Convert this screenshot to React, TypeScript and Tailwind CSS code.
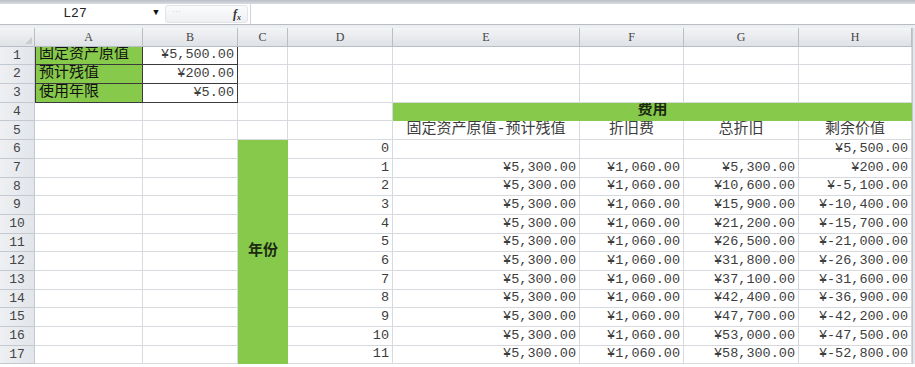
import React from "react";

const COLS = ["A", "B", "C", "D", "E", "F", "G", "H"];

const fmt = (n: number) => {
    const s = Math.abs(n).toLocaleString("en-US", { minimumFractionDigits: 2, maximumFractionDigits: 2 });
    return n < 0 ? `¥-${s}` : `¥${s}`;
};

const gridLine = "border-r border-b border-[#d6d9dd]";
const dark = "border-r border-b border-[#3a3a3a]";
const num = "justify-end text-[13.5px] text-[#3d3d3d]";

const RowHead: React.FC<{ n: number }> = ({ n }) => (
    <div className="flex items-center justify-center bg-gradient-to-r from-[#eef0f3] to-[#e2e5ea] border-r border-b border-[#c4c9d0] text-[13px] text-[#444]">
        {n}
    </div>
);

const Cell: React.FC<{ className?: string; children?: React.ReactNode }> = ({ className = "", children }) => (
    <div className={`flex items-center overflow-hidden whitespace-nowrap px-[3px] ${className}`}>{children}</div>
);

const App: React.FC = () => {
    const years = Array.from({ length: 12 }, (_, i) => i);

    return (
        <div
            className="w-[915px] h-[367px] overflow-hidden bg-white text-[#333]"
            style={{ fontFamily: '"Liberation Mono", "Noto Sans CJK SC", monospace' }}
        >
            {/* Ribbon edge */}
            <div className="h-[4px] bg-gradient-to-b from-[#b9bec6] to-[#d9dde2]" />

            {/* Formula bar */}
            <div className="h-[21px] flex items-stretch bg-white border-b border-[#b8bdc4]">
                <div className="w-[150px] flex items-center justify-center text-[13px] text-[#222]">L27</div>
                <div className="w-[12px] flex items-center justify-center text-[9px] text-[#111]">▼</div>
                <div className="w-[83px] my-[1px] ml-[3px] flex items-center justify-between rounded-[3px] border border-[#e2e5e9] bg-gradient-to-b from-[#fbfbfc] to-[#eef0f2] px-[6px]">
                    <span className="text-[9px] text-[#d6d9dd]">⋯</span>
                    <span className="text-[12px] italic font-bold text-[#333]" style={{ fontFamily: '"Liberation Serif", serif' }}>
                        f<sub className="text-[8px]">x</sub>
                    </span>
                </div>
                <div className="flex-1 ml-[2px] border-l border-[#d0d4d9] bg-white" />
            </div>
            <div className="h-[3px] bg-[#eceef1]" />

            {/* Sheet */}
            <div className="flex">
                <div className="grid grid-cols-[35px_108px_95px_50px_105px_187px_104px_115px_113px] auto-rows-[18.7px]">
                    {/* Column headers */}
                    <div className="bg-gradient-to-b from-[#f3f4f6] to-[#dfe2e6] border-r border-b border-[#b8bec6] flex items-end justify-end p-[2px]">
                        <div className="w-0 h-0 border-l-[7px] border-l-transparent border-b-[7px] border-b-[#c9cdd2]" />
                    </div>
                    {COLS.map((c) => (
                        <div
                            key={c}
                            className="flex items-center justify-center bg-gradient-to-b from-[#f3f4f6] to-[#dfe2e6] border-r border-b border-[#b8bec6] text-[12px] text-[#444]"
                            style={{ fontFamily: '"Liberation Serif", serif' }}
                        >
                            {c}
                        </div>
                    ))}

                    {/* Row 1 */}
                    <RowHead n={1} />
                    <Cell className={`${dark} border-l bg-[#86c94b] text-[15px] text-[#111]`}>固定资产原值</Cell>
                    <Cell className={`${dark} ${num}`}>¥5,500.00</Cell>
                    {["C", "D", "E", "F", "G", "H"].map((c) => <Cell key={c} className={gridLine} />)}

                    {/* Row 2 */}
                    <RowHead n={2} />
                    <Cell className={`${dark} border-l bg-[#86c94b] text-[15px] text-[#111]`}>预计残值</Cell>
                    <Cell className={`${dark} ${num}`}>¥200.00</Cell>
                    {["C", "D", "E", "F", "G", "H"].map((c) => <Cell key={c} className={gridLine} />)}

                    {/* Row 3 */}
                    <RowHead n={3} />
                    <Cell className={`${dark} border-l bg-[#86c94b] text-[15px] text-[#111]`}>使用年限</Cell>
                    <Cell className={`${dark} ${num}`}>¥5.00</Cell>
                    {["C", "D", "E", "F", "G", "H"].map((c) => <Cell key={c} className={gridLine} />)}

                    {/* Row 4 */}
                    <RowHead n={4} />
                    <Cell className={gridLine} />
                    <Cell className={gridLine} />
                    <Cell className={gridLine} />
                    <Cell className={gridLine} />
                    <Cell className="col-span-4 justify-center bg-[#86c94b] border-b border-[#86c94b] text-[15px] font-bold text-[#1c2a12]">
                        费用
                    </Cell>

                    {/* Row 5 */}
                    <RowHead n={5} />
                    <Cell className={gridLine} />
                    <Cell className={gridLine} />
                    <Cell className={gridLine} />
                    <Cell className={gridLine} />
                    <Cell className={`${gridLine} justify-center text-[15px] text-[#3d3d3d]`}>固定资产原值-预计残值</Cell>
                    <Cell className={`${gridLine} justify-center text-[15px] text-[#3d3d3d]`}>折旧费</Cell>
                    <Cell className={`${gridLine} justify-center text-[15px] text-[#3d3d3d]`}>总折旧</Cell>
                    <Cell className={`${gridLine} justify-center text-[15px] text-[#3d3d3d]`}>剩余价值</Cell>

                    {/* Rows 6-17 */}
                    {years.map((i) => (
                        <React.Fragment key={i}>
                            <RowHead n={i + 6} />
                            <Cell className={gridLine} />
                            <Cell className={gridLine} />
                            {i === 0 && (
                                <Cell className="row-span-12 justify-center bg-[#86c94b] text-[15px] font-bold text-[#1c2a12]">
                                    年份
                                </Cell>
                            )}
                            <Cell className={`${gridLine} ${num}`}>{i}</Cell>
                            <Cell className={`${gridLine} ${num}`}>{i === 0 ? "" : fmt(5300)}</Cell>
                            <Cell className={`${gridLine} ${num}`}>{i === 0 ? "" : fmt(1060)}</Cell>
                            <Cell className={`${gridLine} ${num}`}>{i === 0 ? "" : fmt(5300 * i)}</Cell>
                            <Cell className={`${gridLine} ${num}`}>{fmt(5500 - 5300 * i)}</Cell>
                        </React.Fragment>
                    ))}
                </div>
                <div className="flex-1 bg-[#e4e7eb] border-l border-[#c4c9d0]" />
            </div>
        </div>
    );
};

export default App;
